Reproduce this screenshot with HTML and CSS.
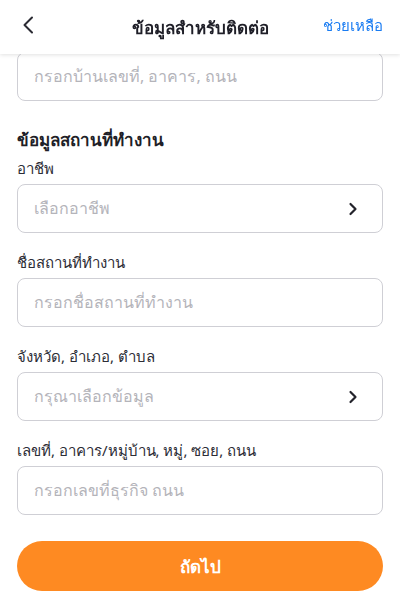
FILE: index.html
```html
<!DOCTYPE html>
<html lang="th">
<head>
  <meta charset="UTF-8" />
  <meta name="viewport" content="width=device-width, initial-scale=1.0"/>
  <title>ข้อมูลสำหรับติดต่อ</title>
  <link rel="stylesheet" href="styles.css">
</head>
<body>
  <header class="topbar">
    <button class="back" aria-label="back">
      <svg width="12" height="18" viewBox="0 0 12 18"><path d="M10 1.5 L2.5 9 L10 16.5" fill="none" stroke="#2b2b33" stroke-width="2" stroke-linecap="round" stroke-linejoin="round"/></svg>
    </button>
    <div class="title">ข้อมูลสำหรับติดต่อ</div>
    <a class="help" href="#">ช่วยเหลือ</a>
  </header>

  <main class="content">
    <div class="input"><span class="ph">กรอกบ้านเลขที่, อาคาร, ถนน</span></div>

    <h2 class="section">ข้อมูลสถานที่ทำงาน</h2>

    <div class="field">
      <label>อาชีพ</label>
      <div class="input select"><span class="ph">เลือกอาชีพ</span>
        <svg class="chev" width="10" height="14" viewBox="0 0 10 14"><path d="M2.5 2 L7.5 7 L2.5 12" fill="none" stroke="#23232b" stroke-width="2.2" stroke-linecap="round" stroke-linejoin="round"/></svg>
      </div>
    </div>

    <div class="field">
      <label>ชื่อสถานที่ทำงาน</label>
      <div class="input"><span class="ph">กรอกชื่อสถานที่ทำงาน</span></div>
    </div>

    <div class="field">
      <label>จังหวัด, อำเภอ, ตำบล</label>
      <div class="input select"><span class="ph">กรุณาเลือกข้อมูล</span>
        <svg class="chev" width="10" height="14" viewBox="0 0 10 14"><path d="M2.5 2 L7.5 7 L2.5 12" fill="none" stroke="#23232b" stroke-width="2.2" stroke-linecap="round" stroke-linejoin="round"/></svg>
      </div>
    </div>

    <div class="field">
      <label>เลขที่, อาคาร/หมู่บ้าน, หมู่, ซอย, ถนน</label>
      <div class="input"><span class="ph">กรอกเลขที่ธุรกิจ ถนน</span></div>
    </div>

    <button class="next">ถัดไป</button>
  </main>
</body>
</html>
```

FILE: styles.css
```css
body {
  margin: 0;
  background: #fff;
  font-family: "Noto Sans", "DejaVu Sans", sans-serif;
  color: #2a2a33;
}
.topbar {
  position: fixed;
  top: 0;
  left: 0;
  right: 0;
  height: 54px;
  background: #fff;
  box-shadow: 0 1px 4px rgba(0, 0, 0, 0.12);
  display: flex;
  align-items: center;
  justify-content: center;
  z-index: 2;
}
.back {
  position: absolute;
  left: 22px;
  top: 16px;
  border: none;
  background: none;
  padding: 0;
}
.title {
  font-size: 17px;
  font-weight: 700;
  color: #1f1f28;
}
.help {
  position: absolute;
  right: 17px;
  top: 14px;
  font-size: 15px;
  color: #1a7cf2;
  text-decoration: none;
}
.content {
  padding: 52px 17px 0;
}
.input {
  height: 47px;
  border: 1px solid #cfcfd5;
  border-radius: 8px;
  display: flex;
  align-items: center;
  justify-content: space-between;
  padding: 0 24px 0 16px;
}
.ph {
  font-size: 16px;
  color: #b4b4ba;
}
.section {
  margin: 27px 0 6px;
  font-size: 17px;
  line-height: 24px;
  font-weight: 700;
  color: #1f1f28;
}
.field {
  margin-bottom: 19px;
}
.field label {
  display: block;
  font-size: 15px;
  line-height: 20px;
  margin-bottom: 6px;
  color: #2d2d36;
}
.next {
  display: block;
  width: 100%;
  height: 50px;
  margin-top: 26px;
  border: none;
  border-radius: 25px;
  background: #fe8a22;
  color: #fff;
  font-family: inherit;
  font-size: 17px;
  font-weight: 700;
}
```
